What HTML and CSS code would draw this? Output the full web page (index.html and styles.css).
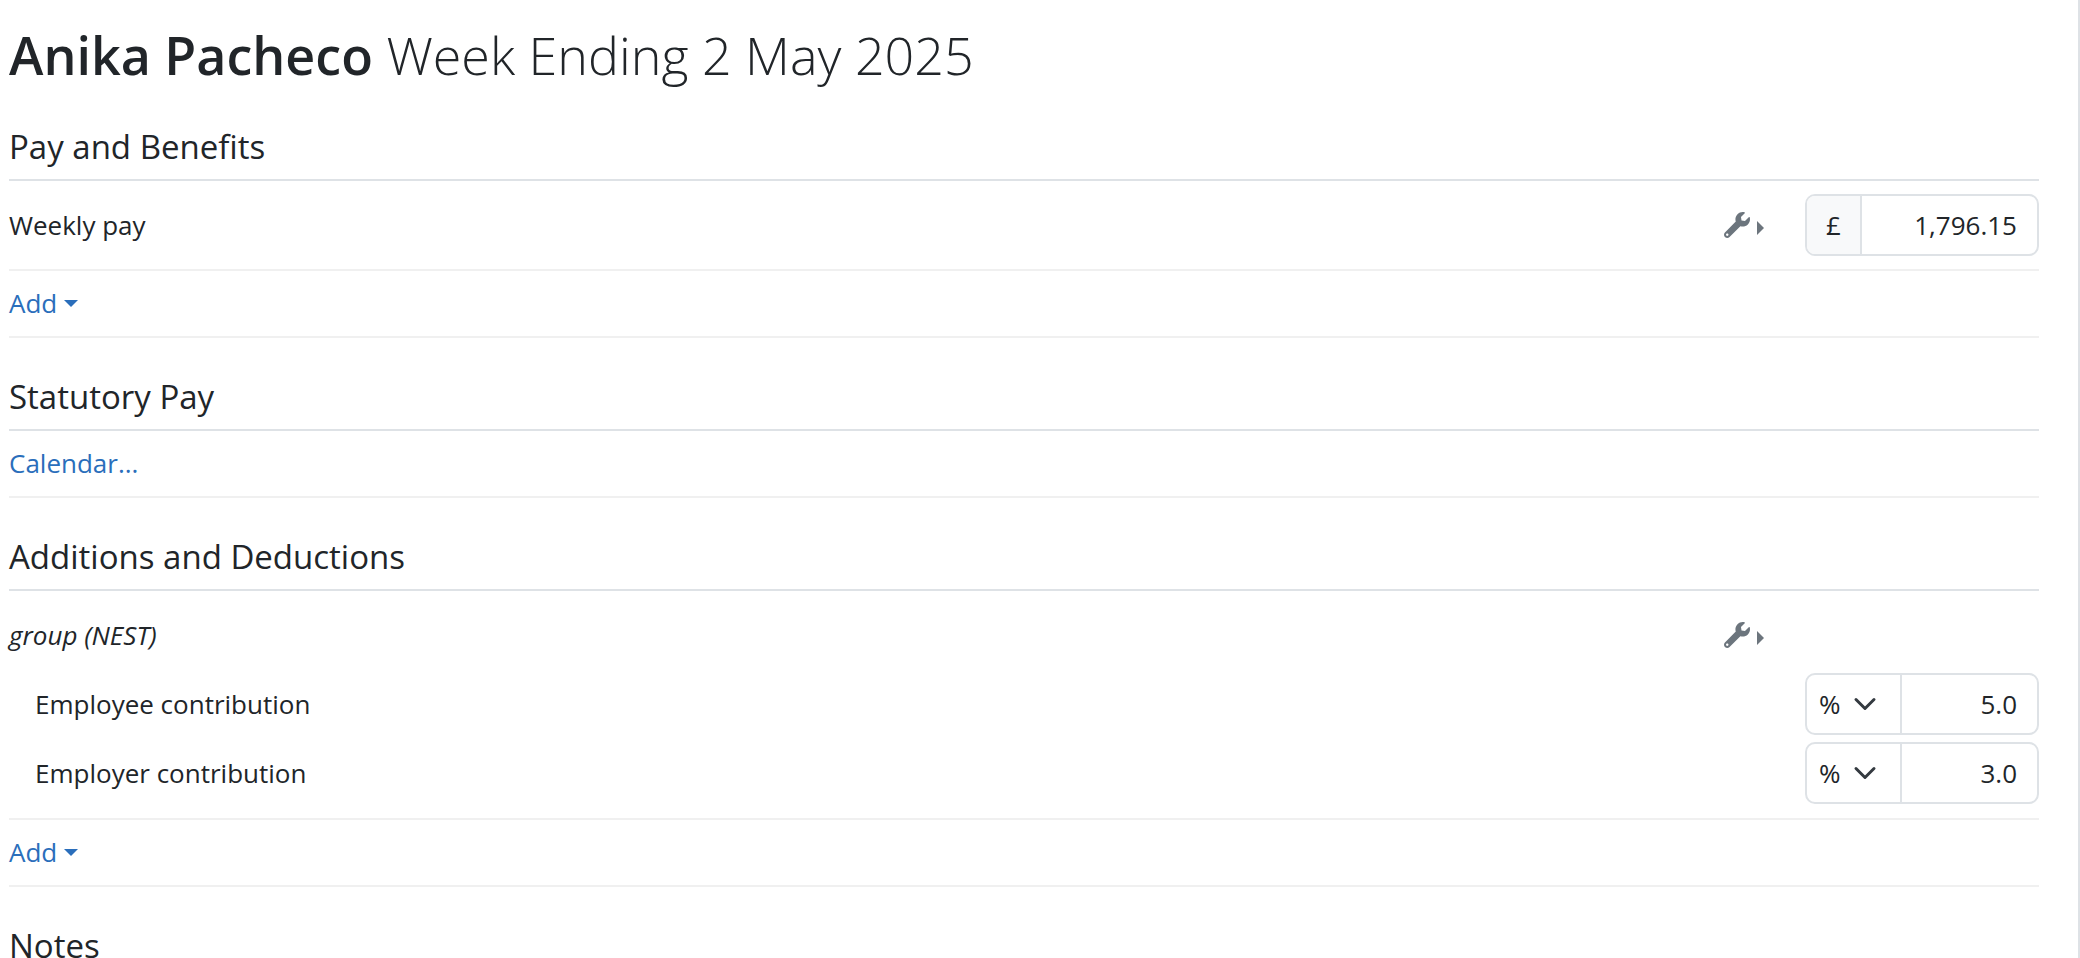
FILE: index.html
```html
<!DOCTYPE html>
<html lang="en">
<head>
  <meta charset="utf-8">
  <title>Anika Pacheco – Week Ending 2 May 2025</title>
  <link rel="stylesheet" href="styles.css">
</head>
<body>
  <svg class="sprite" aria-hidden="true">
    <symbol id="wrench" viewBox="0 0 512 512">
      <path d="M507.73 109.1c-2.24-9.03-13.54-12.09-20.12-5.51l-74.36 74.36-67.88-11.31-11.31-67.88 74.36-74.36c6.62-6.62 3.43-17.9-5.66-20.16-47.38-11.74-99.55.91-136.58 37.93-39.64 39.64-50.55 97.1-34.05 147.2L18.74 402.76c-24.99 24.99-24.99 65.51 0 90.5 24.99 24.99 65.51 24.99 90.5 0l213.21-213.21c50.12 16.71 107.47 5.68 147.37-34.22 37.07-37.07 49.7-89.32 37.91-136.73zM64 472c-13.25 0-24-10.75-24-24 0-13.26 10.75-24 24-24s24 10.74 24 24c0 13.25-10.75 24-24 24z"/>
    </symbol>
  </svg>

  <main class="panel">
    <h1 class="title"><strong class="name">Anika Pacheco</strong> Week Ending 2 May 2025</h1>

    <section class="section">
      <h2 class="heading">Pay and Benefits</h2>
      <div class="item">
        <div class="row">
          <label class="label" for="weekly">Weekly pay</label>
          <button class="tools" type="button" aria-label="Weekly pay options">
            <svg class="icon"><use href="#wrench"/></svg><span class="caret-right"></span>
          </button>
          <div class="field">
            <span class="prefix">£</span>
            <input class="amount" id="weekly" type="text" value="1,796.15">
          </div>
        </div>
      </div>
      <div class="item"><button class="link" type="button">Add<span class="caret-down"></span></button></div>
    </section>

    <section class="section">
      <h2 class="heading">Statutory Pay</h2>
      <div class="item"><a class="link" href="#calendar">Calendar...</a></div>
    </section>

    <section class="section">
      <h2 class="heading">Additions and Deductions</h2>
      <div class="item group">
        <div class="row">
          <em class="label">group (NEST)</em>
          <button class="tools" type="button" aria-label="Group options">
            <svg class="icon"><use href="#wrench"/></svg><span class="caret-right"></span>
          </button>
          <div class="spacer"></div>
        </div>
        <div class="row">
          <label class="label indent" for="employee">Employee contribution</label>
          <div class="field">
            <select class="unit" aria-label="Employee contribution unit"><option>%</option><option>£</option></select>
            <input class="amount" id="employee" type="text" value="5.0">
          </div>
        </div>
        <div class="row">
          <label class="label indent" for="employer">Employer contribution</label>
          <div class="field">
            <select class="unit" aria-label="Employer contribution unit"><option>%</option><option>£</option></select>
            <input class="amount" id="employer" type="text" value="3.0">
          </div>
        </div>
      </div>
      <div class="item"><button class="link" type="button">Add<span class="caret-down"></span></button></div>
    </section>

    <section class="section">
      <h2 class="heading">Notes</h2>
    </section>
  </main>
</body>
</html>
```

FILE: styles.css
```css
* {
  box-sizing: border-box;
}

body {
  margin: 0;
  background: #fff;
  color: #212529;
  font: 400 26px/39px "Open Sans", sans-serif;
}

.sprite {
  display: none;
}

/* Scrolling pane with a rule down its right edge */
.panel {
  height: 100vh;
  padding: 24px 39px 0 9px;
  overflow-y: auto;
  scrollbar-width: none;
  border-right: 2px solid #dee2e6;
}

.title {
  margin: 0 0 41px;
  font-size: 52px;
  font-weight: 300;
  line-height: 62px;
}

.name {
  font-weight: 600;
}

.section {
  margin-bottom: 39px;
}

.heading {
  margin: 0;
  padding-bottom: 13px;
  border-bottom: 2px solid #dee2e6;
  font-size: 33px;
  font-weight: 400;
  line-height: 39px;
}

.item {
  padding: 13px 0;
  border-bottom: 2px solid #f0f0f0;
}

.group {
  display: grid;
  gap: 7px;
  padding-bottom: 14px;
}

.row {
  display: flex;
  align-items: center;
  min-height: 62px;
}

.label {
  flex: 1;
}

.indent {
  padding-left: 26px;
}

.link {
  display: flex;
  align-items: center;
  width: max-content;
  padding: 0;
  border: 0;
  background: none;
  color: #2a6ebb;
  font: inherit;
  text-decoration: none;
}

.caret-down {
  margin-left: 7px;
  border: 7px solid transparent;
  border-top-color: currentColor;
  border-bottom: 0;
}

.tools {
  display: flex;
  align-items: center;
  gap: 7px;
  margin-right: 41px;
  padding: 0;
  border: 0;
  background: none;
  color: #6c757d;
}

.icon {
  width: 26px;
  height: 26px;
  fill: currentColor;
}

.caret-right {
  margin-top: 6px;
  border: 7px solid transparent;
  border-left-color: currentColor;
  border-right: 0;
}

.field,
.spacer {
  width: 234px;
}

.field {
  display: flex;
  height: 62px;
  overflow: hidden;
  border: 2px solid #dee2e6;
  border-radius: 10px;
}

.prefix {
  width: 55px;
  border-right: 2px solid #dee2e6;
  background: #f8f9fa;
  line-height: 58px;
  text-align: center;
}

.unit,
.amount {
  border: 0;
  border-radius: 0;
  background: none;
  color: inherit;
  font: inherit;
}

.unit {
  width: 95px;
  padding: 0 0 0 12px;
  border-right: 2px solid #dee2e6;
  appearance: none;
  background: url("data:image/svg+xml,%3Csvg xmlns='http://www.w3.org/2000/svg' viewBox='0 0 16 16'%3E%3Cpath fill='none' stroke='%23343a40' stroke-linecap='round' stroke-linejoin='round' stroke-width='2' d='m2 5 6 6 6-6'/%3E%3C/svg%3E") no-repeat right 23px center / 24px 24px;
}

.amount {
  flex: 1;
  min-width: 0;
  padding: 0 20px;
  text-align: right;
}
```
